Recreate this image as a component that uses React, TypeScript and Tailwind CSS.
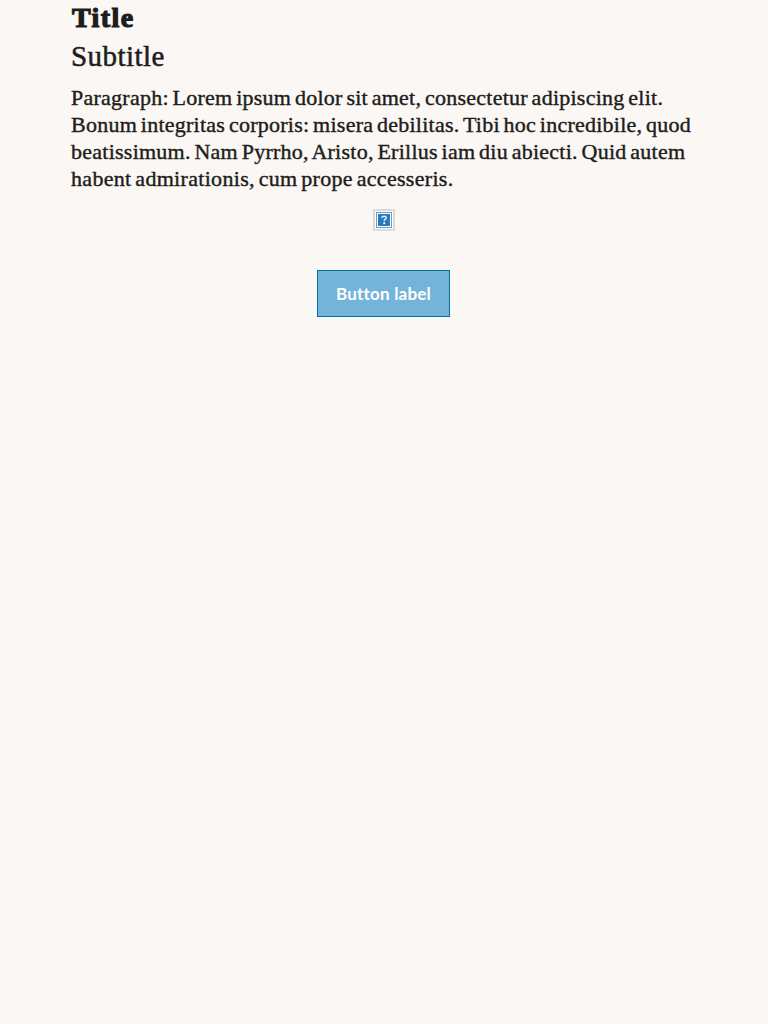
const lines = [
  { text: 'Paragraph: Lorem ipsum dolor sit amet, consectetur adipiscing elit.', spacing: 'tracking-[0.25px]' },
  { text: 'Bonum integritas corporis: misera debilitas. Tibi hoc incredibile, quod', spacing: 'tracking-[0.25px]' },
  { text: 'beatissimum. Nam Pyrrho, Aristo, Erillus iam diu abiecti. Quid autem', spacing: 'tracking-[0.25px]' },
  { text: 'habent admirationis, cum prope accesseris.', spacing: 'tracking-[0.31px]' },
];

function MissingImage() {
  return (
    <svg width="22" height="22" viewBox="0 0 22 22" role="img" aria-label="Missing image">
      <rect width="22" height="22" rx="1" fill="#dedbd7" />
      <rect x="2" y="2" width="18" height="18" fill="#fff" />
      <rect x="3.5" y="3.5" width="15" height="15" fill="#fff" stroke="#6a9dcc" />
      <rect x="5" y="5" width="12" height="12" fill="#287cbd" />
      <path d="M8.7 8.7C9.2 6.9 13.2 6.7 13.2 8.8C13.2 10.1 11.2 10.1 11.2 12" fill="none" stroke="#e4eff8" strokeWidth="1.5" />
      <rect x="10.3" y="13" width="1.8" height="2" fill="#e4eff8" />
    </svg>
  );
}

export default function App() {
  return (
    <main className="flex min-h-screen flex-col bg-[#fbf7f4] px-[71px] font-['Liberation_Serif',serif] text-[#1d1d1b]">
      <h1 className="mt-[2px] h-[36px] pl-px text-[28px] leading-[32px] font-bold tracking-[1.4px] [-webkit-text-stroke:1.2px_#1d1d1b]">Title</h1>
      <h2 className="h-[46px] text-[29px] leading-[36px] tracking-[0.45px] [-webkit-text-stroke:0.5px_#1d1d1b]">Subtitle</h2>
      <p className="text-[22px] leading-[27px] [word-spacing:-2px] [-webkit-text-stroke:0.4px_#1d1d1b]">
        {lines.map((line) => (
          <span key={line.text} className="block whitespace-nowrap">
            <span className={line.spacing}>{line.text}</span>
          </span>
        ))}
      </p>
      <div className="mt-[17px] flex justify-center">
        <MissingImage />
      </div>
      <button className="mt-[39px] mr-px h-[47px] w-[133px] self-center border border-[#0071a4] bg-[#74b3da] font-[Lato,sans-serif] text-[17px] font-bold tracking-[0.2px] whitespace-nowrap text-white">
        Button label
      </button>
    </main>
  );
}
